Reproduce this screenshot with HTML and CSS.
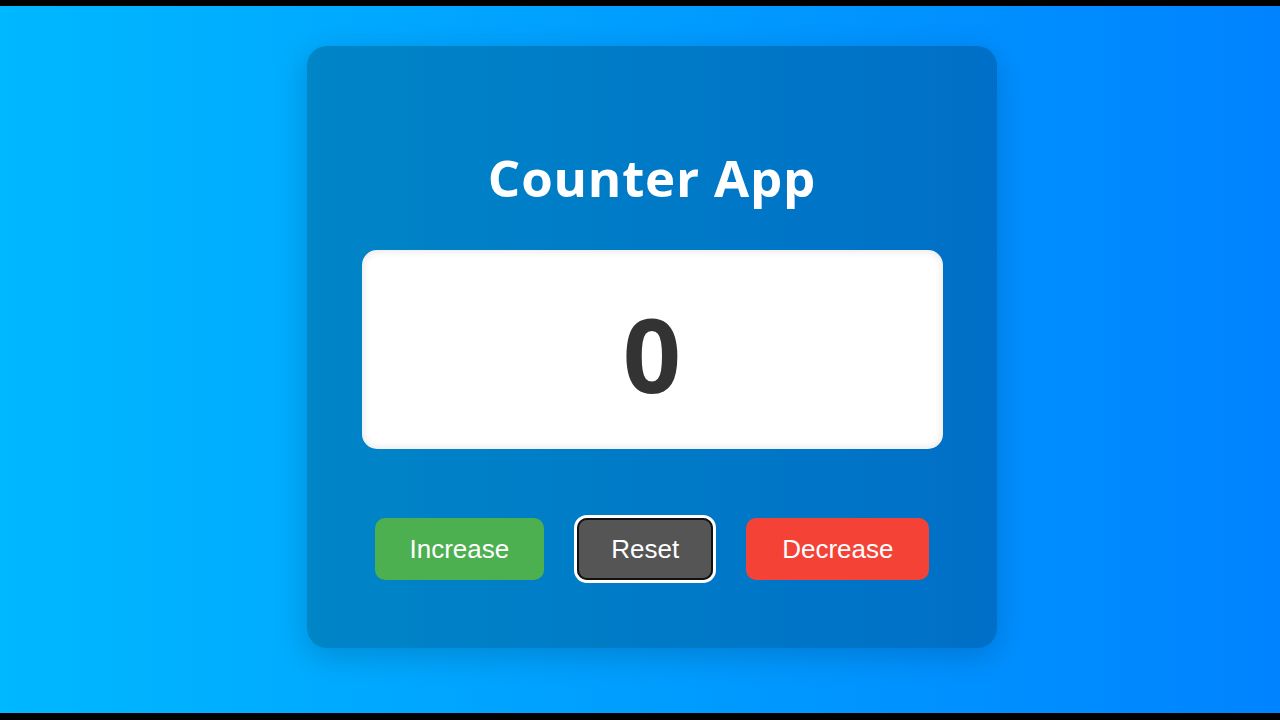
FILE: index.html
```html
<!DOCTYPE html>
<html lang="en">
<head>
<meta charset="utf-8">
<title>Counter App</title>
<link rel="stylesheet" href="styles.css">
</head>
<body>
<main class="stage">
  <section class="card">
    <h1 class="title">Counter App</h1>
    <div class="display"><span class="count">0</span></div>
    <div class="actions">
      <button class="btn btn-increase" type="button">Increase</button>
      <button class="btn btn-reset is-focused" type="button">Reset</button>
      <button class="btn btn-decrease" type="button">Decrease</button>
    </div>
  </section>
</main>
</body>
</html>
```
FILE: styles.css
```css
* { box-sizing: border-box; }
html, body { margin: 0; padding: 0; }
body {
  background: #000;
  padding: 6px 0 7px;
  height: 720px;
  overflow: hidden;
}
.stage {
  height: 707px;
  background: linear-gradient(to right, #00b8ff, #0083ff);
  display: flex;
  flex-direction: column;
  align-items: center;
  padding-top: 40px;
}
.card {
  width: 690px;
  margin-left: 24px;
  background: rgba(0, 0, 0, 0.22);
  border-radius: 20px;
  box-shadow: 0 8px 32px rgba(0, 0, 0, 0.18);
  padding: 54px 54.5px 68px;
  display: flex;
  flex-direction: column;
}
.title {
  margin: 48px 0 44px;
  font-family: "Open Sans", "Noto Sans", sans-serif;
  font-weight: 700;
  font-size: 51px;
  letter-spacing: 0.8px;
  line-height: 58px;
  color: #fff;
  text-align: center;
}
.display {
  height: 199px;
  background: #fff;
  border-radius: 15px;
  box-shadow: inset 0 0 10px rgba(0, 0, 0, 0.12);
  display: flex;
  justify-content: center;
  align-items: center;
  padding-top: 8px;
}
.count {
  font-family: "Open Sans", "Noto Sans", sans-serif;
  font-weight: 700;
  font-size: 102px;
  line-height: 1;
  color: #333;
}
.actions {
  margin-top: 69px;
  display: flex;
  justify-content: center;
  gap: 33px;
}
.btn {
  font-family: "Liberation Sans", Arial, sans-serif;
  font-size: 26px;
  line-height: 30px;
  height: 62px;
  padding: 0 35px;
  color: #fff;
  border: none;
  border-radius: 10px;
  cursor: pointer;
}
.btn-increase { background: #4caf50; }
.btn-reset { background: #555; }
.btn-decrease { background: #f44336; padding: 0 36px; }
.btn-reset.is-focused {
  box-shadow: inset 0 0 0 2px #111, 0 0 0 3px #fff;
  border-radius: 10px;
  padding: 0 34px;
}
```
